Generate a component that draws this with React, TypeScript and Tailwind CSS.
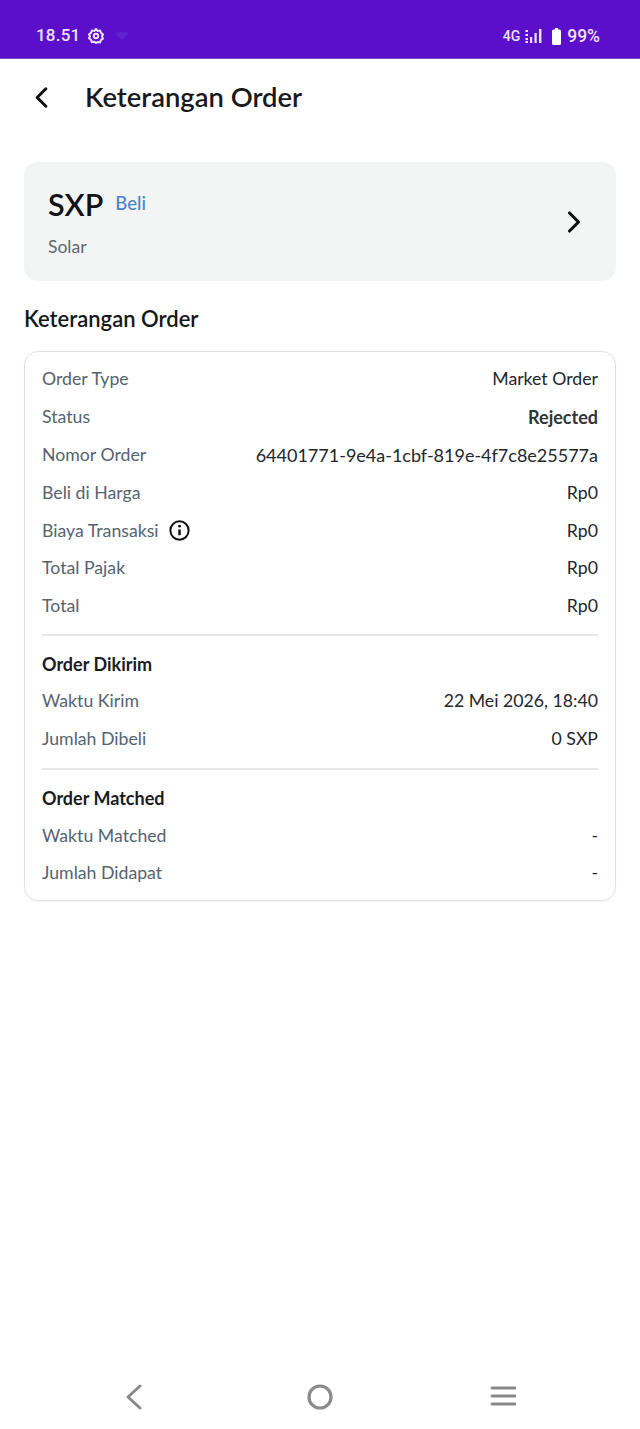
import { ChevronLeft, ChevronRight } from "lucide-react";

const ROW_LABEL = "text-[17.7px] leading-[22px] text-[#56636f]";
const ROW_VALUE = "text-[17.7px] leading-[22px] text-[#22272b]";

function Row({ label, value, bold, info, wide }: { label: string; value: string; bold?: boolean; info?: boolean; wide?: boolean }) {
  return (
    <div className="flex h-[37.8px] items-center justify-between">
      <div className="flex items-center gap-[10px]">
        <span className={ROW_LABEL}>{label}</span>
        {info && (
          <svg width="21" height="21" viewBox="0 0 20 20" fill="none" stroke="#111" strokeWidth="1.900">
            <circle cx="10" cy="10" r="8.700" />
            <path d="M10 9v5.500" strokeWidth="2.400" />
            <circle cx="10" cy="5.900" r="1.300" fill="#111" stroke="none" />
          </svg>
        )}
      </div>
      <span className={bold ? "text-[18px] leading-[22px] font-bold text-[#2f3438]" : wide ? "text-[18px] leading-[22px] text-[#22272b]" : ROW_VALUE}>{value}</span>
    </div>
  );
}

function StatusBar() {
  return (
    <div className="flex h-[59px] items-center justify-between border-b border-[#7d4fc0] bg-[#5a0fcb] pt-[14px] pr-[40px] pl-[36px] font-['Roboto',sans-serif] text-[#eee3fa]">
      <div className="flex items-center gap-[8px]">
        <span className="text-[17px] font-medium tracking-[0.2px]">18.51</span>
        <svg width="16" height="16" viewBox="0 0 16 16" fill="none" stroke="#eee3fa" strokeWidth="2">
          <path d="M8 1l1.600 1.900 2.500-.3.900 2.300 2 1.500L14 8.400l.9 2.200-2 1.500-.9 2.300-2.500-.3L8 15l-1.600-1.200-2.500.3-.9-2.300-2-1.500L2 8.400 1 6.400l2-1.500.9-2.300 2.500.3z" />
          <circle cx="8" cy="8" r="2.200" />
        </svg>
        <svg className="ml-[3px]" width="14" height="10" viewBox="0 0 14 10" fill="#6322cf">
          <path d="M0 2.500C3.500 0 10.500 0 14 2.500L7 9z" />
        </svg>
      </div>
      <div className="flex items-center">
        <span className="text-[14px] font-medium">4G</span>
        <svg className="ml-[5px]" width="18" height="16" viewBox="0 0 18 16" fill="#eee3fa">
          <rect x="0.500" y="2" width="2.500" height="2" />
          <rect x="0.500" y="6" width="2.500" height="2" />
          <rect x="0.500" y="10" width="2.500" height="2" />
          <rect x="0.500" y="13" width="2.500" height="2" />
          <rect x="5" y="9" width="2.200" height="6" />
          <rect x="9.500" y="5" width="2.200" height="10" />
          <rect x="14" y="1" width="2.400" height="14" />
        </svg>
        <svg className="ml-[9px]" width="9" height="17" viewBox="0 0 9 17" fill="#ffffff">
          <path d="M3 0h3v1.500h1.500A1.500 1.500 0 0 1 9 3v12.500a1.500 1.500 0 0 1-1.500 1.500h-6A1.500 1.500 0 0 1 0 15.500V3a1.500 1.500 0 0 1 1.500-1.500H3z" />
        </svg>
        <span className="ml-[6px] text-[17.500px] font-medium">99%</span>
      </div>
    </div>
  );
}

export default function App() {
  return (
    <div className="flex min-h-[1429px] flex-col bg-white font-['Lato',sans-serif]">
      <StatusBar />

      {/* Header */}
      <div className="flex h-[77px] items-center pb-[1px] pl-[24px]">
        <ChevronLeft className="h-[35px] w-[35px] text-[#111]" strokeWidth={2.100} aria-hidden="true" />
        <h1 className="ml-[26px] text-[27.400px] leading-[36px] font-semibold text-[#17191c]">Keterangan Order</h1>
      </div>

      <div className="mt-[26px] px-[24px]">
        {/* Asset card */}
        <div className="flex h-[119px] items-center justify-between rounded-[14px] bg-[#f3f5f5] pr-[24px] pl-[24px]">
          <div className="pb-[2px]">
            <div className="flex items-start">
              <span className="text-[30.500px] leading-[40px] font-semibold text-[#111317]">SXP</span>
              <span className="mt-[7px] ml-[12px] text-[18.500px] leading-[24px] font-medium text-[#4a83ca]">Beli</span>
            </div>
            <div className="mt-[12px] text-[17.500px] leading-[22px] text-[#5e6873]">Solar</div>
          </div>
          <ChevronRight className="h-[36px] w-[36px] text-[#111]" strokeWidth={2.100} aria-hidden="true" />
        </div>

        <h2 className="mt-[24px] text-[22px] leading-[28px] font-semibold text-[#15171a]">Keterangan Order</h2>

        {/* Details */}
        <div className="mt-[18px] rounded-[14px] border border-[#dfe2e5] px-[17px] pt-[8.500px] pb-[8px] shadow-[0_1px_2px_rgba(0,0,0,0.05)]">
          <Row label="Order Type" value="Market Order" />
          <Row label="Status" value="Rejected" bold />
          <Row label="Nomor Order" value="64401771-9e4a-1cbf-819e-4f7c8e25577a" wide />
          <Row label="Beli di Harga" value="Rp0" />
          <Row label="Biaya Transaksi" value="Rp0" info />
          <Row label="Total Pajak" value="Rp0" />
          <Row label="Total" value="Rp0" />
          <div className="mt-[8.500px] border-t-2 border-[#e6e8ea]" />
          <div className="mt-[10px] flex h-[37px] items-center text-[18px] font-bold text-[#1a1c1f]">Order Dikirim</div>
          <Row label="Waktu Kirim" value="22 Mei 2026, 18:40" />
          <Row label="Jumlah Dibeli" value="0 SXP" />
          <div className="mt-[9.500px] border-t-2 border-[#e6e8ea]" />
          <div className="mt-[10px] flex h-[37px] items-center text-[18px] font-bold text-[#1a1c1f]">Order Matched</div>
          <Row label="Waktu Matched" value="-" />
          <Row label="Jumlah Didapat" value="-" />
        </div>
      </div>

      {/* Android navigation bar */}
      <div className="mt-auto flex h-[46px] items-start justify-between pr-[124px] pl-[122px]">
        <svg width="24" height="28" viewBox="0 0 24 28" fill="none" stroke="#8a8a8a" strokeWidth="3" strokeLinecap="round" strokeLinejoin="round">
          <path d="M18 3L6 14l12 11" />
        </svg>
        <svg className="ml-[3px]" width="26" height="28" viewBox="0 0 26 28" fill="none" stroke="#8a8a8a" strokeWidth="3.200">
          <circle cx="13" cy="14" r="11" />
        </svg>
        <svg width="26" height="28" viewBox="0 0 26 28" fill="none" stroke="#8a8a8a" strokeWidth="3" strokeLinecap="round">
          <path d="M2 5h23M2 13h23M2 21h23" />
        </svg>
      </div>
    </div>
  );
}
